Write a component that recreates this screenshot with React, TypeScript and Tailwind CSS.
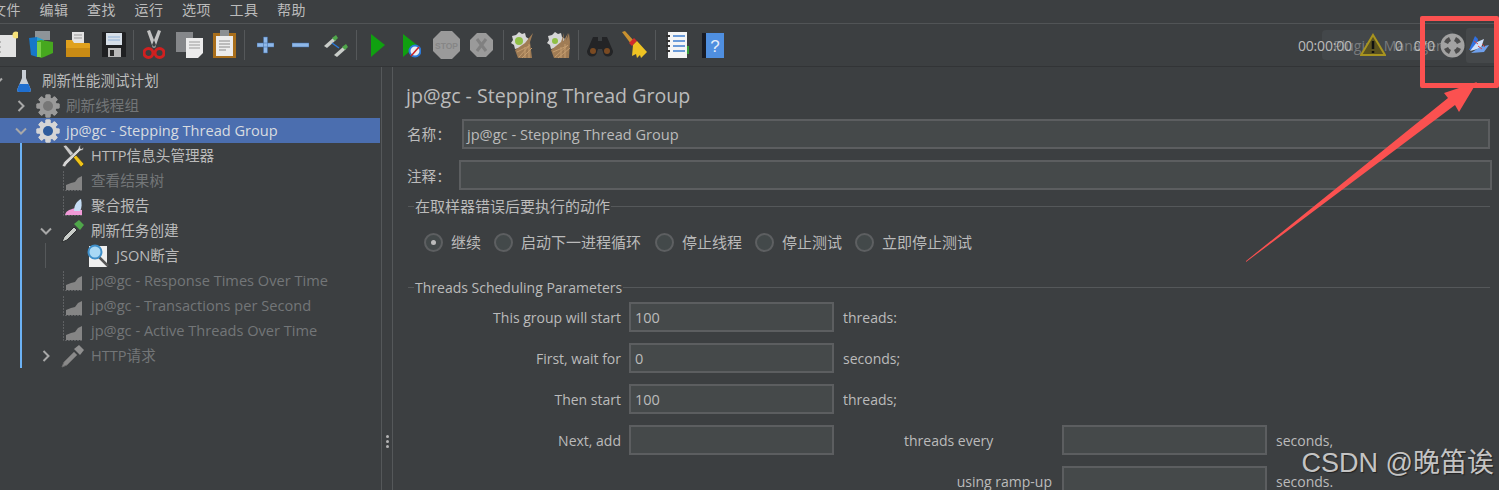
import type { ReactNode } from "react";

const font = "font-['Open_Sans','Noto_Sans_CJK_SC',sans-serif]";

function Sep({ className }: { className: string }) {
  return <div className={`h-[30px] w-px shrink-0 bg-[#55585a] ${className}`} />;
}

function Icon({ w, className, children }: { w: number; className?: string; children: ReactNode }) {
  return (
    <svg width={w} height="30" viewBox={`0 0 ${w} 30`} className={`shrink-0 ${className ?? ""}`}>
      {children}
    </svg>
  );
}

function Gear({ size = 24, fill = "#9a9a9a", center = "#777" }: { size?: number; fill?: string; center?: string }) {
  const teeth = [0, 45, 90, 135, 180, 225, 270, 315];
  return (
    <svg width={size} height={size} viewBox="0 0 24 24" className="shrink-0">
      {teeth.map((a) => (
        <rect key={a} x="9.5" y="0.5" width="5" height="23" rx="1" fill={fill} transform={`rotate(${a} 12 12)`} />
      ))}
      <circle cx="12" cy="12" r="8.8" fill={fill} />
      <circle cx="12" cy="12" r="5" fill={center} />
    </svg>
  );
}

function GraphIcon({ pink }: { pink?: boolean }) {
  return (
    <svg width="22" height="22" viewBox="0 0 22 22" className="shrink-0">
      <path d="M1.5 1v19.5H21" stroke="#5f6163" strokeWidth="1" strokeDasharray="2 1" fill="none" />
      {pink ? (
        <>
          <path d="M3 20c1-4 4-5 7-6 3-1 5 0 10 1v5z" fill="#f09ad8" />
          <path d="M12 16c0-6 3-10 7-12 1 4 1 9-1 12z" fill="#c5ddf5" />
        </>
      ) : (
        <path d="M4 20v-5l5-2 4-1 3-4 4-2v14z" fill="#858585" />
      )}
    </svg>
  );
}

function Pipette({ green }: { green?: boolean }) {
  return (
    <svg width="24" height="24" viewBox="0 0 24 24" className="shrink-0">
      <path d="M1 23l2-5L13 8l3 3L6 21z" fill={green ? "#c9cdc9" : "#8a8a8a"} stroke={green ? "#2d2f30" : "#6d6d6d"} strokeWidth="1" />
      <path d="M13 5l6 6 4-5-5-5z" fill={green ? "#4fa64a" : "#8f8f8f"} />
    </svg>
  );
}

function ClearIcon({ w, second }: { w: number; second?: boolean }) {
  return (
    <>
      <path d="M10 2l3 2 3-1 1 4 3 2-2 3 1 4-4 1-2 3-3-2-4 1-1-4-3-2 2-3-1-4 4-1z" fill="#d6d6d6" />
      <circle cx="10" cy="11" r={second ? 3 : 4} fill="#8fbf45" />
      <path
        d={
          second
            ? `M${w - 4} 3l-2 8 3-8 1 9-1 16H9l-3-8 10-8 3-9-1 9z`
            : `M${w - 1} 3l-3 9 2 16H9l-3-8 10-7z`
        }
        fill="#a07c55"
      />
      <path d={`M10 27l${w - 14}-12M8 22l${w - 13}-6M13 28l${w - 15}-10M16 17v11M20 14v14`} stroke="#c49c6e" strokeWidth="1" />
    </>
  );
}

function Chevron({ open }: { open: boolean }) {
  return (
    <svg width="12" height="12" viewBox="0 0 12 12" className="shrink-0">
      <path d={open ? "M1 3.5l5 5 5-5" : "M3.5 1l5 5-5 5"} stroke="#a8a8a8" strokeWidth="2" fill="none" />
    </svg>
  );
}

type Row = {
  label: string;
  pl: string;
  icon: ReactNode;
  chevron?: "open" | "closed";
  dim?: boolean;
  selected?: boolean;
};

const rows: Row[] = [
  {
    label: "刷新性能测试计划",
    pl: "pl-[15px] -ml-[24px]",
    chevron: "open",
    icon: (
      <svg width="16" height="24" viewBox="0 0 16 24" className="shrink-0">
        <path d="M6 1h4v8l5 12q0 2-2 2H3q-2 0-2-2L6 9z" fill="#c8ced6" />
        <path d="M3.5 15h9l2.500 6q0 2-2 2H3q-2 0-2-2z" fill="#1f6fd0" />
      </svg>
    ),
  },
  { label: "刷新线程组", pl: "pl-[15px]", chevron: "closed", dim: true, icon: <Gear /> },
  {
    label: "jp@gc - Stepping Thread Group",
    pl: "pl-[15px]",
    chevron: "open",
    selected: true,
    icon: <Gear fill="#d5d5d5" center="#2f5c9c" />,
  },
  {
    label: "HTTP信息头管理器",
    pl: "pl-[40px]",
    icon: (
      <svg width="24" height="24" viewBox="0 0 24 24" className="shrink-0">
        <path d="M2 2l3-1 9 10-3 3z" fill="#c9c9c9" stroke="#333" strokeWidth="0.6" />
        <path d="M12 13l3-2 8 9-3 3z" fill="#f0c419" stroke="#3b3217" strokeWidth="0.6" />
        <path d="M21 1l-3 1-1 3L3 18l-2 4 3 1 2-3L19 7l3-1 1-3-3 2-1-2z" fill="#d6d6d6" stroke="#333" strokeWidth="0.6" />
      </svg>
    ),
  },
  { label: "查看结果树", pl: "pl-[40px]", dim: true, icon: <GraphIcon /> },
  { label: "聚合报告", pl: "pl-[40px]", icon: <GraphIcon pink /> },
  { label: "刷新任务创建", pl: "pl-[40px]", chevron: "open", icon: <Pipette green /> },
  {
    label: "JSON断言",
    pl: "pl-[65px]",
    icon: (
      <svg width="24" height="24" viewBox="0 0 24 24" className="shrink-0">
        <path d="M3 2h18v21H3z" fill="#efefef" />
        <path d="M13 13l9 9" stroke="#555" strokeWidth="2.500" />
        <circle cx="9" cy="8" r="6.500" fill="#a9d8f5" stroke="#3f8fc9" strokeWidth="2" />
      </svg>
    ),
  },
  { label: "jp@gc - Response Times Over Time", pl: "pl-[40px]", dim: true, icon: <GraphIcon /> },
  { label: "jp@gc - Transactions per Second", pl: "pl-[40px]", dim: true, icon: <GraphIcon /> },
  { label: "jp@gc - Active Threads Over Time", pl: "pl-[40px]", dim: true, icon: <GraphIcon /> },
  { label: "HTTP请求", pl: "pl-[40px]", chevron: "closed", dim: true, icon: <Pipette /> },
];

function TreeRow({ row }: { row: Row }) {
  return (
    <div className={`flex h-[25px] items-center ${row.pl} ${row.selected ? "bg-[#4b6eaf]" : ""}`}>
      <span className="flex w-[12px] shrink-0 justify-center">
        {row.chevron && <Chevron open={row.chevron === "open"} />}
      </span>
      <span className="ml-[9px] flex w-[24px] shrink-0 justify-center">{row.icon}</span>
      <span
        className={`ml-[6px] whitespace-nowrap text-[14.6px] ${
          row.selected ? "text-[#d8dce0]" : row.dim ? "text-[#737678]" : "text-[#bbbbbb]"
        }`}
      >
        {row.label}
      </span>
    </div>
  );
}

function Radio({ label, checked, className }: { label: string; checked?: boolean; className: string }) {
  return (
    <div className={`flex items-center ${className}`}>
      <span className="flex h-[19px] w-[19px] items-center justify-center rounded-full border-2 border-[#5d5f61] bg-[#43494a]">
        {checked && <span className="h-[5px] w-[5px] rounded-full bg-[#bbbbbb]" />}
      </span>
      <span className="ml-[8px] whitespace-nowrap">{label}</span>
    </div>
  );
}

function Field({ value }: { value?: string }) {
  return (
    <div className="flex h-[30px] w-[205px] items-center border-2 border-[#5c5e60] bg-[#45494a] pl-[4px] pt-[2px] text-[14.5px]">
      {value}
    </div>
  );
}

function Legend({ title }: { title: string }) {
  return (
    <div className="flex items-center">
      <div className="h-px w-[6px] bg-[#55585a]" />
      <span className="px-[1px] whitespace-nowrap">{title}</span>
      <div className="h-px flex-1 bg-[#55585a]" />
    </div>
  );
}

export default function App() {
  return (
    <div className={`relative flex h-[490px] w-[1499px] flex-col overflow-hidden bg-[#3c3f41] text-[#bbbbbb] ${font}`}>
      <div className="flex h-[23px] shrink-0 items-center pb-[5px] text-[14px] -ml-[8px]">
        {["文件", "编辑", "查找", "运行", "选项", "工具", "帮助"].map((m) => (
          <span key={m} className="w-[47.5px] shrink-0 tracking-[0.5px]">
            {m}
          </span>
        ))}
      </div>

      <div className="relative flex h-[44px] shrink-0 items-center border-y border-y-[#515456] border-b-[#323436] -ml-[7px]">
        <Icon w={25}>
          <path d="M1 5h22v22H1z" fill="#e3e3e3" />
          <circle cx="23" cy="5" r="3.500" fill="#f6e27a" />
          <path d="M7 12h1M7 17h1M7 22h1" stroke="#888" />
        </Icon>
        <Icon w={25} className="ml-[10px]">
          <path d="M7 1h15v9H7z" fill="#8e9498" />
          <path d="M1 8l8-1v20l-6-2z" fill="#1777c9" />
          <path d="M9 7l7 3v16l-7 1z" fill="#25a1d0" />
          <path d="M9 11l4-1 12 2v11l-9 4-3 1-4-2z" fill="#46a81f" />
          <path d="M9 12h4v15H9z" fill="#79cf4a" />
        </Icon>
        <Icon w={24} className="ml-[13px]">
          <path d="M6 2h12v12H6z" fill="#e2e2e2" />
          <path d="M8 5h8M8 8h8" stroke="#999" />
          <path d="M0 10h6l2 3h15q1 0 1 1v13H1q-1 0-1-1z" fill="#e0a11d" />
          <path d="M0 18h24v9H1q-1 0-1-1z" fill="#c98b14" />
        </Icon>
        <Icon w={24} className="ml-[12px]">
          <path d="M0 2h23l1 1v24H0z" fill="#1f2022" />
          <path d="M4 3h16v12H4z" fill="#d7dfe8" />
          <path d="M6 7h12M6 10h12" stroke="#8fb0d6" />
          <path d="M6 18h13v9H6z" fill="#b9b9b9" />
          <path d="M8 20h4v6H8z" fill="#2b2b2b" />
        </Icon>
        <Sep className="ml-[7px]" />
        <Icon w={22} className="ml-[9px]">
          <path d="M4 1l3-1 6 15-3 3zM18 1l-3-1-6 15 3 3z" fill="#c3c3c3" />
          <circle cx="5.500" cy="23" r="4.500" fill="none" stroke="#d02020" strokeWidth="3" />
          <circle cx="16.500" cy="23" r="4.500" fill="none" stroke="#d02020" strokeWidth="3" />
        </Icon>
        <Icon w={27} className="ml-[11px]">
          <path d="M0 2h17v20H0z" fill="#85878a" />
          <path d="M10 8h17v15l-5 5H10z" fill="#ececec" />
          <path d="M13 12h11M13 15h11M13 18h11" stroke="#9a9a9a" />
        </Icon>
        <Icon w={23} className="ml-[10px]">
          <path d="M0 3h23v25H0z" fill="#a96f1c" />
          <path d="M3 6h17v20H3z" fill="#ececec" />
          <path d="M7 0h9v6H7z" fill="#8b8f92" />
          <path d="M6 11h11M6 14h11M6 17h11M6 20h7" stroke="#8a8a8a" />
        </Icon>
        <Sep className="ml-[8px]" />
        <Icon w={17} className="ml-[12px]">
          <path d="M0 13h17v4H0zM6.500 7h4v16h-4z" fill="#8fb8e8" stroke="#3c6ba5" strokeWidth="0.5" />
        </Icon>
        <Icon w={17} className="ml-[18px]">
          <path d="M0 13h17v4H0z" fill="#8fb8e8" stroke="#3c6ba5" strokeWidth="0.5" />
        </Icon>
        <Icon w={25} className="ml-[14px]">
          <path d="M1 16l9-8 3 2-9 8z" fill="#c9cdc9" />
          <path d="M9 8l4-3 2 3-3 3z" fill="#4fa64a" />
          <path d="M11 25l9-8 3 2-9 8z" fill="#c9cdc9" />
          <path d="M19 17l4-3 2 3-3 3z" fill="#4fa64a" />
          <path d="M9 13l7 5" stroke="#2a78d8" strokeWidth="1.500" />
        </Icon>
        <Sep className="ml-[8px]" />
        <Icon w={14} className="ml-[14px]">
          <path d="M0 4l14 11L0 27z" fill="#10a010" />
        </Icon>
        <Icon w={18} className="ml-[18px]">
          <path d="M0 4l14 11L0 27z" fill="#10a010" />
          <circle cx="12" cy="21" r="5.500" fill="#e8eef5" stroke="#2a78d8" strokeWidth="2" />
          <path d="M8 26l8-9" stroke="#cc2020" strokeWidth="1.500" />
        </Icon>
        <Icon w={27} className="ml-[12px]">
          <path d="M8 1h11l8 8v12l-8 8H8l-8-8V9z" fill="#9a9a9a" />
          <text x="13.500" y="18.500" textAnchor="middle" fontSize="8.500" fontWeight="700" fill="#868686" fontFamily="Liberation Sans">
            STOP
          </text>
        </Icon>
        <Icon w={23} className="ml-[10px]">
          <path d="M7 3h9l7 7v10l-7 7H7l-7-7V10z" fill="#9a9a9a" />
          <path d="M7 9l9 12M16 9L7 21" stroke="#808080" strokeWidth="3" />
        </Icon>
        <Sep className="ml-[10px]" />
        <Icon w={25} className="ml-[5px]">
          <ClearIcon w={25} />
        </Icon>
        <Icon w={27} className="ml-[11px]">
          <ClearIcon w={27} second />
        </Icon>
        <Sep className="ml-[6px]" />
        <Icon w={26} className="ml-[8px]">
          <path d="M6 7h5v4h4V7h5l6 14a5 5 0 1 1-10 1l-1-3h-4l-1 3a5 5 0 1 1-10-1z" fill="#232426" />
          <circle cx="6" cy="21" r="3" fill="#7a4a22" />
          <circle cx="20" cy="21" r="3" fill="#7a4a22" />
        </Icon>
        <Icon w={26} className="ml-[8px]">
          <path d="M1 2l3-1 9 10-3 3z" fill="#c9912f" />
          <path d="M8 13l5-5 3 3-5 5z" fill="#d12c2c" />
          <path d="M12 15l4-4 10 11-6 6-1-3-3 3-1-4-4 2z" fill="#eec323" />
        </Icon>
        <Sep className="ml-[8px]" />
        <Icon w={23} className="ml-[10px]">
          <path d="M2 2h19v26H2z" fill="#f5f5f5" />
          <path d="M0 6h4M0 11h4M0 16h4M0 21h4" stroke="#333" strokeWidth="2" />
          <path d="M7 6h12M7 11h12M7 16h12M7 21h12" stroke="#3f7fd0" strokeWidth="1.500" />
          <path d="M21 16h2v8h-2z" fill="#3aa03a" />
        </Icon>
        <Icon w={22} className="ml-[13px]">
          <path d="M0 3h5v25H0z" fill="#171a24" />
          <path d="M4 3h18v25H4z" fill="#4f8fe0" />
          <text x="13" y="22" textAnchor="middle" fontSize="17" fill="#e4eefa" fontFamily="Liberation Sans">
            ?
          </text>
        </Icon>

        <div className="absolute left-[1329px] flex h-[30px] w-[131px] items-center justify-center rounded-[4px] bg-[#43474a] text-[14px] text-[#797b7d]">
          Plugins Manager
        </div>
        <div className="absolute left-[1305px] flex items-center text-[14px]">
          <span className="tracking-[-0.2px]">00:00:00</span>
          <svg width="26" height="24" viewBox="0 0 26 24" className="ml-[8px] shrink-0">
            <path d="M13 2L25 22H1z" fill="#5a5220" stroke="#a8941f" strokeWidth="2" />
            <path d="M13 8v8M13 18v2" stroke="#111" strokeWidth="2.500" />
          </svg>
          <span className="ml-[9px]">0</span>
          <span className="ml-[11px]">0/0</span>
        </div>
        <svg width="25" height="25" viewBox="0 0 25 25" className="absolute left-[1447px]">
          <circle cx="12.500" cy="12.500" r="12" fill="#a2a2a2" />
          <path d="M4 9a9 9 0 0 1 5-5l2 4a5 5 0 0 0-3 3zM21 9a9 9 0 0 0-5-5l-2 4a5 5 0 0 1 3 3zM4 16a9 9 0 0 0 5 5l2-4a5 5 0 0 1-3-3zM21 16a9 9 0 0 1-5 5l-2-4a5 5 0 0 0 3-3z" fill="#4c4c4c" />
        </svg>
        <div className="absolute left-[1473px] flex h-[35px] w-[32px] items-center justify-center rounded-[3px] bg-[#45484a]">
          <svg width="22" height="20" viewBox="0 0 22 20" className="-ml-[6px]">
            <path d="M1 15L7 1l3 3-2 10z" fill="#2f6fe0" />
            <path d="M2 16L9 7l7-3-3 9z" fill="#cfe0fa" />
            <path d="M3 18l9-6 9-2-5 7z" fill="#6fa0ec" />
            <path d="M6 6l4 3M10 11l4 3M14 9l3 3" stroke="#d04848" />
          </svg>
        </div>
      </div>

      <div className="flex min-h-0 flex-1">
        <div className="relative w-[380px] shrink-0 pt-[1px]">
          {rows.map((r) => (
            <TreeRow key={r.label} row={r} />
          ))}
          <div className="absolute left-[20px] top-[76px] h-[225px] w-[2px] bg-[#6cb2f5]" />
          <div className="absolute left-[45px] top-[176px] h-[25px] w-px bg-[#55585a]" />
        </div>
        <div className="relative ml-[1px] w-[12px] shrink-0 border-x border-x-[#55585a]">
          <div className="absolute left-[4px] top-[368px] flex flex-col gap-[2px]">
            <span className="h-[3px] w-[3px] rounded-full bg-[#b5b5b5]" />
            <span className="h-[3px] w-[3px] rounded-full bg-[#b5b5b5]" />
            <span className="h-[3px] w-[3px] rounded-full bg-[#b5b5b5]" />
          </div>
        </div>

        <div className="min-w-0 flex-1 text-[14px]">
          <div className="pl-[13px] pt-[15px] text-[19.6px] leading-[27px]">jp@gc - Stepping Thread Group</div>
          <div className="mt-[10px] flex h-[30px] items-center pl-[14px] pr-[9px] text-[14.6px]">
            <span className="w-[55px] shrink-0 pt-[2px]">名称：</span>
            <div className="flex h-full flex-1 items-center border-2 border-[#5c5e60] bg-[#45494a] pl-[3px] pt-[2px]">
              jp@gc - Stepping Thread Group
            </div>
          </div>
          <div className="mt-[11px] flex h-[30px] items-center pl-[14px] pr-[7px] text-[14.6px]">
            <span className="w-[52px] shrink-0 pt-[3px]">注释：</span>
            <div className="h-full flex-1 border-2 border-[#5c5e60] bg-[#45494a]" />
          </div>
          <div className="mt-[5px] pl-[15px] pr-[9px] text-[15px]">
            <Legend title="在取样器错误后要执行的动作" />
          </div>
          <div className="mt-[13px] flex h-[24px] items-center pl-[31px] text-[15px]">
            <Radio label="继续" checked className="" />
            <Radio label="启动下一进程循环" className="ml-[13px]" />
            <Radio label="停止线程" className="ml-[14px]" />
            <Radio label="停止测试" className="ml-[13px]" />
            <Radio label="立即停止测试" className="ml-[13px]" />
          </div>
          <div className="mt-[22px] pl-[15px] pr-[9px]">
            <Legend title="Threads Scheduling Parameters" />
          </div>
          <div className="mt-[4px] grid grid-cols-[228px_8px_205px_228px_205px_auto] items-center gap-y-[11px] [&>span]:pt-[2px]">
            <span className="text-right">This group will start</span>
            <span />
            <Field value="100" />
            <span className="pl-[9px]">threads:</span>
            <span />
            <span />

            <span className="text-right">First, wait for</span>
            <span />
            <Field value="0" />
            <span className="pl-[9px]">seconds;</span>
            <span />
            <span />

            <span className="text-right">Then start</span>
            <span />
            <Field value="100" />
            <span className="pl-[9px]">threads;</span>
            <span />
            <span />

            <span className="text-right">Next, add</span>
            <span />
            <Field />
            <span className="pl-[70px]">threads every</span>
            <Field />
            <span className="pl-[9px]">seconds,</span>

            <span />
            <span />
            <span />
            <span className="pr-[10px] text-right">using ramp-up</span>
            <Field />
            <span className="pl-[9px]">seconds.</span>
          </div>
        </div>
      </div>

      <div className="absolute right-[5px] top-[445px] font-['Liberation_Sans','Noto_Sans_CJK_SC',sans-serif] text-[27px] leading-[36px] text-[#c4c4c4] [text-shadow:1px_1px_1px_#222]">
        CSDN @晚笛诶
      </div>

      <div className="absolute left-[1420px] top-[16px] h-[72px] w-[79px] rounded-[2px] border-[5px] border-[#fb5150]" />
      <svg width="1499" height="490" viewBox="0 0 1499 490" className="pointer-events-none absolute left-0 top-0">
        <path d="M1246 261L1448 98 1444 93 1477 82 1459 112 1455 105 1246 262z" fill="#fb5150" />
      </svg>
    </div>
  );
}
